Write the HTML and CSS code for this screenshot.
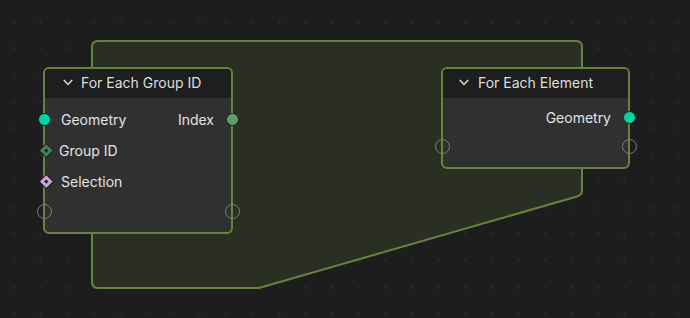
FILE: index.html
```html
<!DOCTYPE html>
<html lang="en">
<head>
    <meta charset="UTF-8">
    <title>Node Editor</title>
    <link rel="stylesheet" href="styles.css">
</head>
<body>
    <div class="canvas">

        <!-- frame behind the nodes -->
        <svg class="frame" width="690" height="318" viewBox="0 0 690 318">
            <path d="M98 41 H576 Q582 41 582 47 V190 Q582 195 577 196.5 L259 288 H98 Q92 288 92 282 V47 Q92 41 98 41 Z"
                  fill="#2b2e23" stroke="#64853b" stroke-width="2"/>
        </svg>

        <div class="node node-group">
            <div class="node-header">
                <svg class="chevron" width="10" height="7" viewBox="0 0 10 7"><polyline points="0.8,1 5,5.4 9.2,1" fill="none" stroke="#dcdcdc" stroke-width="1.5"/></svg>
                <span class="title">For Each Group ID</span>
            </div>
            <div class="node-body">
                <div class="row">
                    <span class="socket in geo"></span>
                    <span class="label">Geometry</span>
                    <span class="label">Index</span>
                    <span class="socket out int"></span>
                </div>
                <div class="row">
                    <span class="socket in diamond field-int"><i></i></span>
                    <span class="label label-tight">Group ID</span>
                </div>
                <div class="row">
                    <span class="socket in diamond field-bool"><i></i></span>
                    <span class="label">Selection</span>
                </div>
                <div class="row row-last">
                    <span class="socket in empty"></span>
                    <span class="socket out empty"></span>
                </div>
            </div>
        </div>

        <div class="node node-element">
            <div class="node-header">
                <svg class="chevron" width="10" height="7" viewBox="0 0 10 7"><polyline points="0.8,1 5,5.4 9.2,1" fill="none" stroke="#dcdcdc" stroke-width="1.5"/></svg>
                <span class="title">For Each Element</span>
            </div>
            <div class="node-body">
                <div class="row row-output">
                    <span class="label">Geometry</span>
                    <span class="socket out geo"></span>
                </div>
                <div class="row row-sockets">
                    <span class="socket in empty"></span>
                    <span class="socket out empty"></span>
                </div>
            </div>
        </div>

    </div>
</body>
</html>
```

FILE: styles.css
```css
* {
    box-sizing: border-box;
}

body {
    margin: 0;
    background-color: #1d1d1d;
    font-family: Inter, "Noto Sans", sans-serif;
    color: #e4e4e4;
}

/* dotted grid of the editor */
.canvas {
    position: relative;
    width: 690px;
    height: 318px;
    overflow: hidden;
    background-color: #1d1d1d;
    background-image: radial-gradient(circle, #272727 1.3px, transparent 1.8px);
    background-size: 26.56px 26.56px;
    background-position: 0.7px 8.7px;
}

.frame {
    position: absolute;
    top: 0;
    left: 0;
}

/* nodes sit on the canvas at their own spot */
.node {
    position: absolute;
    display: flex;
    flex-direction: column;
    border: 2px solid #64853b;
    border-radius: 6px;
    background-color: #303030;
}

.node-group {
    left: 43px;
    top: 67px;
    width: 190px;
    height: 167px;
}

.node-element {
    left: 441px;
    top: 67px;
    width: 189px;
    height: 102px;
}

.node-header {
    display: flex;
    align-items: center;
    gap: 8px;
    height: 29px;
    padding-left: 18px;
    padding-bottom: 3px;
    background-color: #1e1e1e;
    border-radius: 4px 4px 0 0;
}

.node-element .node-header {
    padding-left: 16px;
    gap: 9px;
}

.chevron {
    display: block;
}

.title {
    font-size: 14px;
    color: #dedede;
}

.node-body {
    flex: 1;
    display: flex;
    flex-direction: column;
    padding-top: 6px;
}

.row {
    position: relative;
    display: flex;
    align-items: center;
    justify-content: space-between;
    height: 31px;
    padding: 0 17px 0 16px;
}

.row-last {
    height: 29px;
}

.row-output {
    height: 26px;
    justify-content: flex-end;
    padding-right: 17px;
}

.row-sockets {
    height: 32px;
}

.label {
    font-size: 14px;
    color: #e4e4e4;
}

.label-tight {
    margin-left: -2px;
}

/* sockets hang over the node border */
.socket {
    position: absolute;
    top: 50%;
    width: 13px;
    height: 13px;
    margin-top: -6.5px;
    border-radius: 50%;
}

.socket.in {
    left: -7.5px;
}

.socket.out {
    right: -7.5px;
}

.geo {
    background-color: #00d6a3;
    border: 1px solid #10231d;
}

.int {
    background-color: #5f9d6a;
    border: 1px solid #16221a;
}

.empty {
    width: 15px;
    height: 15px;
    margin-top: -7.5px;
    border: 1.5px solid #7d7d7d;
    background-color: transparent;
}

.socket.in.empty {
    left: -8.5px;
}

.socket.out.empty {
    right: -8.5px;
}

.diamond {
    display: flex;
    align-items: center;
    justify-content: center;
    width: 10.5px;
    height: 10.5px;
    margin-top: -5.25px;
    border-radius: 1px;
    transform: rotate(45deg);
    border: 1px solid #1a1a1a;
}

.diamond.in {
    left: -4.5px;
}

.diamond i {
    display: block;
    width: 2.5px;
    height: 2.5px;
    background-color: #1b1b1b;
}

.field-int {
    background-color: #3f8551;
}

.field-bool {
    background-color: #cda2df;
}
```
